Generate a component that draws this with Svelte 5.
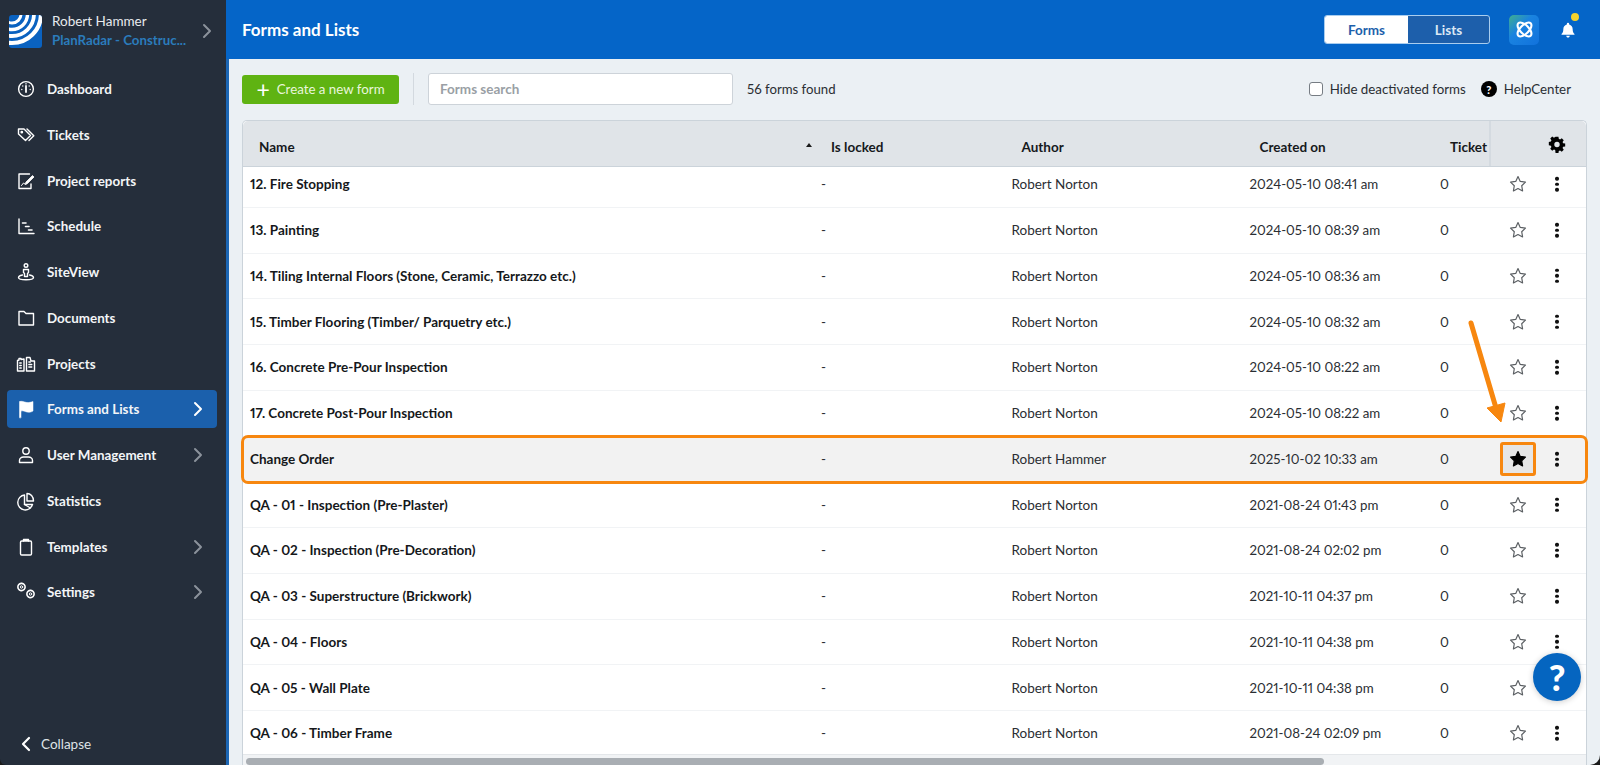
<script>
  const nav = [
    { label: 'Dashboard', icon: 'dash' },
    { label: 'Tickets', icon: 'tag' },
    { label: 'Project reports', icon: 'report' },
    { label: 'Schedule', icon: 'sched' },
    { label: 'SiteView', icon: 'site' },
    { label: 'Documents', icon: 'folder' },
    { label: 'Projects', icon: 'proj' },
    { label: 'Forms and Lists', icon: 'flag', active: true, more: true },
    { label: 'User Management', icon: 'user', more: true },
    { label: 'Statistics', icon: 'pie' },
    { label: 'Templates', icon: 'clip', more: true },
    { label: 'Settings', icon: 'gears', more: true }
  ];
  const rows = [
    ['12. Fire Stopping', 'Robert Norton', '2024-05-10 08:41 am'],
    ['13. Painting', 'Robert Norton', '2024-05-10 08:39 am'],
    ['14. Tiling Internal Floors (Stone, Ceramic, Terrazzo etc.)', 'Robert Norton', '2024-05-10 08:36 am'],
    ['15. Timber Flooring (Timber/ Parquetry etc.)', 'Robert Norton', '2024-05-10 08:32 am'],
    ['16. Concrete Pre-Pour Inspection', 'Robert Norton', '2024-05-10 08:22 am'],
    ['17. Concrete Post-Pour Inspection', 'Robert Norton', '2024-05-10 08:22 am'],
    ['Change Order', 'Robert Hammer', '2025-10-02 10:33 am', true],
    ['QA - 01 - Inspection (Pre-Plaster)', 'Robert Norton', '2021-08-24 01:43 pm'],
    ['QA - 02 - Inspection (Pre-Decoration)', 'Robert Norton', '2021-08-24 02:02 pm'],
    ['QA - 03 - Superstructure (Brickwork)', 'Robert Norton', '2021-10-11 04:37 pm'],
    ['QA - 04 - Floors', 'Robert Norton', '2021-10-11 04:38 pm'],
    ['QA - 05 - Wall Plate', 'Robert Norton', '2021-10-11 04:38 pm'],
    ['QA - 06 - Timber Frame', 'Robert Norton', '2021-08-24 02:09 pm']
  ];
  const starPath = 'M10 1.8l2.5 5.3 5.8.8-4.2 4 1 5.8L10 15.1l-5.1 2.6 1-5.8-4.2-4 5.8-.8z';
</script>

<div class="page">
  <aside class="side">
    <div class="account">
      <svg class="logo" viewBox="0 0 33 33">
        <defs><clipPath id="lg"><rect width="33" height="33" rx="3" /></clipPath></defs>
        <rect width="33" height="33" rx="3" fill="#0a62c0" />
        <g fill="none" stroke="#fff" clip-path="url(#lg)">
          <circle cx="3" cy="-1" r="9" stroke-width="3" />
          <circle cx="3" cy="-1" r="15.500" stroke-width="3.400" />
          <circle cx="3" cy="-1" r="22" stroke-width="3.800" />
          <circle cx="3" cy="-1" r="29" stroke-width="4.200" />
        </g>
      </svg>
      <div class="who">
        <div class="person">Robert Hammer</div>
        <div class="org">PlanRadar - Construc...</div>
      </div>
      <svg class="chev top" viewBox="0 0 10 16"><path d="M2 2l6 6-6 6" /></svg>
    </div>

    <nav>
      {#each nav as item}
        <div class="item" class:active={item.active}>
          <svg class="ico" viewBox="0 0 20 20" fill="none" stroke="#fff" stroke-width="1.4" stroke-linecap="round" stroke-linejoin="round">
            {#if item.icon === 'dash'}
              <circle cx="10" cy="10" r="7.400" /><path d="M10 7v6" stroke-width="1.800" /><path d="M5.800 10.500v.1M14.200 10.500v.1M6.800 7v.1M13.200 7v.1M10 4.800v.1" stroke-width="1.400" />
            {:else if item.icon === 'tag'}
              <path d="M2.500 4h5.500l6.500 6.500-5 5-7-6.500z" /><path d="M11 4l6.800 6.800-4.800 4.700" /><circle cx="5.800" cy="7.200" r=".7" />
            {:else if item.icon === 'report'}
              <path d="M13.500 3H3v14.500h12V13" /><path d="M5.500 14.500l2-2.500 2 1.500 1.500-1" stroke-width="1" /><path d="M10 11l6.500-6.500 1.500 1.500-6.500 6.500-2 .5z" fill="#fff" stroke-width=".8" />
            {:else if item.icon === 'sched'}
              <path d="M3 3v14.500h15" /><path d="M6.500 7h3.500M9.500 10.500h3.500M12.500 14h3.500" stroke-width="1.600" />
            {:else if item.icon === 'site'}
              <circle cx="10" cy="3.500" r="1.800" /><path d="M7.500 7.500h5v3l-1 1v3h-3v-3l-1-1z" /><path d="M6.500 13C4 13.500 2.500 14.500 2.500 15.500c0 1.300 3.400 2.300 7.500 2.300s7.500-1 7.500-2.300c0-1-1.500-2-4-2.500" />
            {:else if item.icon === 'folder'}
              <path d="M3 3.500h5l2 2h7.500v11.500H3z" />
            {:else if item.icon === 'proj'}
              <path d="M1.500 6.500l1.500-.5V4.500h2v1l3-.5V17H1.500z" /><path d="M10.500 17V3.500h3.500l1 3.500h3.500v10z" /><path d="M3.700 9h1.600M3.700 11.500h1.600M3.700 14h1.600M12.800 8h1.600M12.800 10.500h3M12.800 13h3" stroke-width="1.300" />
            {:else if item.icon === 'flag'}
              <path d="M3.500 18.500V2.500C7 1.500 9.500 4 12.500 3.500c2-.2 3.500-.5 4.500-1V12c-1.500 1-3 1.200-4.500 1.200-3 0-5-2-7.500-1.200v6.500z" fill="#fff" stroke-width=".5" />
            {:else if item.icon === 'user'}
              <circle cx="10" cy="6" r="3.200" /><path d="M3.500 17.500v-2c0-2 1.800-3.500 4-3.500h5c2.200 0 4 1.500 4 3.500v2z" />
            {:else if item.icon === 'pie'}
              <path d="M8.500 4a7.500 7.500 0 1 0 8 9.500H8.500z" /><path d="M11 2.500c3.500 0 6.500 3 6.500 7.500H11z" /><path d="M8.500 13.500l6 3.500" />
            {:else if item.icon === 'clip'}
              <rect x="4.500" y="4" width="11" height="14" rx="1.200" /><path d="M7.500 4V2.500h5V4" fill="#fff" />
            {:else if item.icon === 'gears'}
              <circle cx="5.500" cy="5" r="3.600" stroke-dasharray="1.800 .6" stroke-width="1.600" /><circle cx="5.500" cy="5" r="1.200" stroke-width="1" /><circle cx="14.500" cy="12" r="3.600" stroke-dasharray="1.800 .6" stroke-width="1.600" /><circle cx="14.500" cy="12" r="1.200" stroke-width="1" />
            {/if}
          </svg>
          <span class="label">{item.label}</span>
          {#if item.more}
            <svg class="chev" viewBox="0 0 10 16"><path d="M2 2l6 6-6 6" /></svg>
          {/if}
        </div>
      {/each}
    </nav>

    <div class="collapse">
      <svg viewBox="0 0 10 16"><path d="M8 2L2 8l6 6" /></svg>
      <span>Collapse</span>
    </div>
  </aside>

  <main class="main">
    <header class="topbar">
      <h1>Forms and Lists</h1>
      <div class="seg">
        <span class="on">Forms</span>
        <span>Lists</span>
      </div>
      <div class="appicon">
        <svg viewBox="0 0 24 24" fill="none" stroke="#fff" stroke-width="2.400">
          <ellipse cx="12" cy="12" rx="10" ry="5" transform="rotate(45 12 12)" />
          <ellipse cx="12" cy="12" rx="10" ry="5" transform="rotate(-45 12 12)" />
        </svg>
      </div>
      <div class="bell">
        <svg viewBox="0 0 20 20" fill="#fff"><path d="M10 2a1.300 1.300 0 0 1 1.300 1.300v.6c2.500.6 3.900 2.700 3.900 5.200 0 3 .8 4.300 2 5.400v.8H2.800v-.8c1.200-1.100 2-2.400 2-5.400 0-2.500 1.400-4.600 3.900-5.200v-.6A1.300 1.300 0 0 1 10 2zM8 16.500h4a2 2 0 0 1-4 0z" /></svg>
        <i class="dot"></i>
      </div>
    </header>

    <div class="content">
      <div class="toolbar">
        <button class="create"><span class="plus">+</span>Create a new form</button>
        <span class="sep"></span>
        <div class="search">Forms search</div>
        <span class="found">56 forms found</span>
        <span class="hide"><i class="check"></i>Hide deactivated forms</span>
        <span class="hc"><i class="q">?</i>HelpCenter</span>
      </div>

      <div class="table">
        <div class="thead">
          <div class="th first">Name<i class="caret"></i></div>
          <div class="th">Is locked</div>
          <div class="th">Author</div>
          <div class="th">Created on</div>
          <div class="th">Ticket</div>
          <div class="th gear">
            <svg viewBox="0 0 20 20" fill="#000"><path fill-rule="evenodd" d="M8.400 1.500h3.200l.4 2.300 1.400.6 1.900-1.300 2.200 2.200-1.300 1.900.6 1.400 2.300.4v3.200l-2.300.4-.6 1.400 1.300 1.900-2.200 2.200-1.900-1.300-1.400.6-.4 2.300H8.400L8 16.200l-1.400-.6-1.900 1.300-2.200-2.200 1.300-1.900-.6-1.400-2.300-.4V7.200l2.300-.4.6-1.400-1.300-1.900 2.200-2.200 1.900 1.300L8 1.600zM10 7a3 3 0 1 0 0 6 3 3 0 0 0 0-6z" transform="translate(0 .5)" /></svg>
          </div>
        </div>
        {#each rows as r}
          <div class="tr" class:hl={r[3]}>
            <div class="td title">{r[0]}</div>
            <div class="td">-</div>
            <div class="td">{r[1]}</div>
            <div class="td date">{r[2]}</div>
            <div class="td">0</div>
            <div class="td act">
              <span class="starbox">
                <svg viewBox="0 0 20 20"><path d={starPath} fill={r[3] ? '#000' : 'none'} stroke={r[3] ? '#000' : '#5b5f63'} stroke-width="1.300" stroke-linejoin="round" /></svg>
              </span>
              <span class="dots"><i></i><i></i><i></i></span>
            </div>
          </div>
        {/each}
        <div class="scroll"><i></i></div>
      </div>
    </div>
  </main>

  <svg class="arrow" viewBox="0 0 60 120" fill="none">
    <path d="M8 3L33 88" stroke="#f7870f" stroke-width="5" stroke-linecap="round" />
    <path d="M24 88L42 83 38 102z" fill="#f7870f" stroke="#f7870f" stroke-width="1" stroke-linejoin="round" />
  </svg>
  <div class="helpfab">?</div>
</div>

<style>
  :global(body) { margin: 0; background: #1b1b1b; }
  .page {
    position: relative; display: flex; width: 1600px; height: 765px; overflow: hidden;
    font-family: Lato, "Liberation Sans", sans-serif; color: #1b1f23; font-size: 13.5px;
    font-variant-numeric: proportional-nums;
  }
  .side {
    width: 226px; flex: none; background: #252e3b; color: #fff; display: flex; flex-direction: column;
    border-bottom-left-radius: 6px;
  }
  .account { display: flex; align-items: center; height: 66px; padding: 0 13px 0 9px; flex: none; margin-top: -2px; }
  .logo { width: 33px; height: 33px; flex: none; }
  .who { margin-left: 10px; flex: 1; min-width: 0; }
  .person { font-size: 13.500px; color: #e8ebee; line-height: 18px; }
  .org { font-size: 13.300px; font-weight: 700; color: #2b7cbc; line-height: 20px; white-space: nowrap; }
  .chev { width: 10px; height: 16px; flex: none; fill: none; stroke: #8b929b; stroke-width: 2; stroke-linecap: round; stroke-linejoin: round; }
  .chev.top { margin-right: 1px; }
  nav { display: flex; flex-direction: column; padding: 6px 9px 0 7px; gap: 7.75px; }
  .item { display: flex; align-items: center; height: 38px; border-radius: 4px; padding: 0 14px 0 9px; }
  .item.active { background: #1b60ac; }
  .item.active .chev { stroke: #fff; }
  .ico { width: 20px; height: 20px; flex: none; }
  .label { margin-left: 11px; flex: 1; font-weight: 700; font-size: 13.400px; color: #f3f5f7; white-space: nowrap; }
  .collapse { margin-top: auto; display: flex; align-items: center; height: 24px; padding: 0 0 9px 21px; color: #dfe3e7; font-size: 13.500px; }
  .collapse svg { width: 10px; height: 16px; fill: none; stroke: #fff; stroke-width: 2.200; stroke-linecap: round; stroke-linejoin: round; }
  .collapse span { margin-left: 10px; }

  .main { flex: 1; min-width: 0; display: flex; flex-direction: column; background: #ebf0f4; border-left: 3px solid #1c66b4; border-bottom-right-radius: 10px; }
  .topbar { height: 59px; flex: none; background: #0565c8; display: flex; align-items: center; padding: 0 23px 0 16px; margin-left: -3px; color: #fff; }
  h1 { margin: 0 auto 0 0; font-size: 17px; font-weight: 700; }
  .seg { display: flex; width: 166px; height: 29px; box-sizing: border-box; border: 1px solid #a9cdef; border-radius: 3px; overflow: hidden; font-weight: 700; background: #1d5fab; }
  .seg span { flex: 1; display: flex; align-items: center; justify-content: center; color: #dbe8f5; }
  .seg .on { flex: none; width: 83px; background: #fff; color: #1d5fab; }
  .appicon { width: 30px; height: 30px; margin-left: 19px; border-radius: 5px; background: linear-gradient(135deg, #3fae8f 0%, #1a83e0 40%, #1172dc 100%); display: flex; align-items: center; justify-content: center; }
  .appicon svg { width: 21px; height: 21px; }
  .bell { position: relative; width: 18px; height: 18px; margin-left: 20px; }
  .bell svg { width: 18px; height: 18px; display: block; }
  .dot { position: absolute; left: 12px; top: -8px; width: 8px; height: 8px; border-radius: 50%; background: #f6d32d; }

  .content { flex: 1; min-height: 0; padding: 14px 13px 0 13px; display: flex; flex-direction: column; }
  .toolbar { display: flex; align-items: center; height: 32px; flex: none; }
  .create { height: 29px; width: 157px; border: 0; border-radius: 3px; background: #5fb312; color: #e9f6dc; font: 13.300px Lato, sans-serif; display: flex; align-items: center; justify-content: center; padding: 0; }
  .plus { font-size: 23px; line-height: 20px; color: #fff; margin-right: 7px; }
  .sep { width: 1px; height: 32px; background: #d3d9df; margin: 0 14px; }
  .search { width: 305px; height: 32px; box-sizing: border-box; border: 1px solid #cdd3d9; border-radius: 3px; background: #fff; color: #9a9fa5; font-weight: 700; padding-left: 11px; display: flex; align-items: center; }
  .found { margin-left: 14px; margin-right: auto; color: #2a2e33; font-size: 13.200px; }
  .hide { display: flex; align-items: center; color: #2a2e33; margin-right: 15px; font-size: 13.300px; }
  .check { width: 12px; height: 12px; border: 1px solid #767c83; border-radius: 3px; background: #fff; margin-right: 7px; display: block; }
  .hc { display: flex; align-items: center; margin-right: 16px; color: #2a2e33; font-size: 13.300px; }
  .q { width: 16px; height: 16px; border-radius: 50%; background: #000; color: #fff; font-style: normal; font-weight: 900; font-size: 11px; display: flex; align-items: center; justify-content: center; margin-right: 7px; }

  .table { margin-top: 15px; flex: 1; background: #fff; border: 1px solid #cbd3da; border-bottom: 0; border-radius: 5px 5px 0 0; position: relative; }
  .thead, .tr { display: grid; grid-template-columns: 571px 190.500px 238px 190.500px 56px 98px; }
  .thead { height: 45px; position: relative; z-index: 2; background: #e0e4e8; border-bottom: 1px solid #cbd3da; font-weight: 700; color: #16191c; border-radius: 5px 5px 0 0; }
  .th { display: flex; align-items: center; padding: 7px 0 0 17px; white-space: nowrap; }
  .th.first { position: relative; padding-left: 16px; }
  .caret { position: absolute; left: 563px; top: 22px; width: 0; height: 0; border: 3px solid transparent; border-top: 0; border-bottom: 4px solid #1a1a1a; }
  .th.gear { border-left: 2px solid #d4dae0; padding: 0 21px 0 0; justify-content: flex-end; box-sizing: border-box; }
  .th.gear svg { width: 18px; height: 18px; margin-top: 1px; }
  .tr { height: 45.75px; border-bottom: 1px solid #f1f3f5; box-sizing: border-box; position: relative; }
  .thead + .tr { margin-top: -5px; }
  .td { display: flex; align-items: center; padding-left: 7px; color: #2a2e33; white-space: nowrap; }
  .td.title { font-weight: 700; color: #15181b; }
  .td.date { font-size: 13.300px; }
  .act { position: relative; padding: 0; }
  .starbox { position: absolute; left: 11px; top: 50%; width: 36px; height: 34px; transform: translateY(-50%); display: flex; align-items: center; justify-content: center; box-sizing: border-box; }
  .starbox svg { width: 18px; height: 18px; }
  .dots { position: absolute; left: 66px; top: 50%; transform: translateY(-50%); display: flex; flex-direction: column; gap: 2px; }
  .dots i { display: block; width: 3.500px; height: 3.500px; border-radius: 50%; background: #111; }
  .tr.hl { background: #f2f2f2; outline: 3px solid #f7870f; outline-offset: -1px; border-radius: 5px; border-bottom: 0; z-index: 1; }
  .tr.hl .starbox { border: 3px solid #f7870f; border-radius: 3px; background: #e6e6e6; }
  .scroll { height: 12px; background: #f1f3f5; position: absolute; left: 0; right: 0; top: 633px; border-top: 1px solid #e4e7ea; box-sizing: border-box; }
  .scroll i { position: absolute; left: 3px; top: 3px; width: 1078px; height: 7px; border-radius: 4px; background: #a9aeb3; }

  .arrow { position: absolute; left: 1463px; top: 320px; width: 60px; height: 120px; z-index: 3; }
  .helpfab { position: absolute; left: 1533px; top: 653px; width: 48px; height: 48px; border-radius: 50%; background: #0565c0; color: #fff; font-weight: 900; font-size: 36px; display: flex; align-items: center; justify-content: center; z-index: 4; box-shadow: 0 1px 6px rgba(0,0,0,.2); }
</style>
